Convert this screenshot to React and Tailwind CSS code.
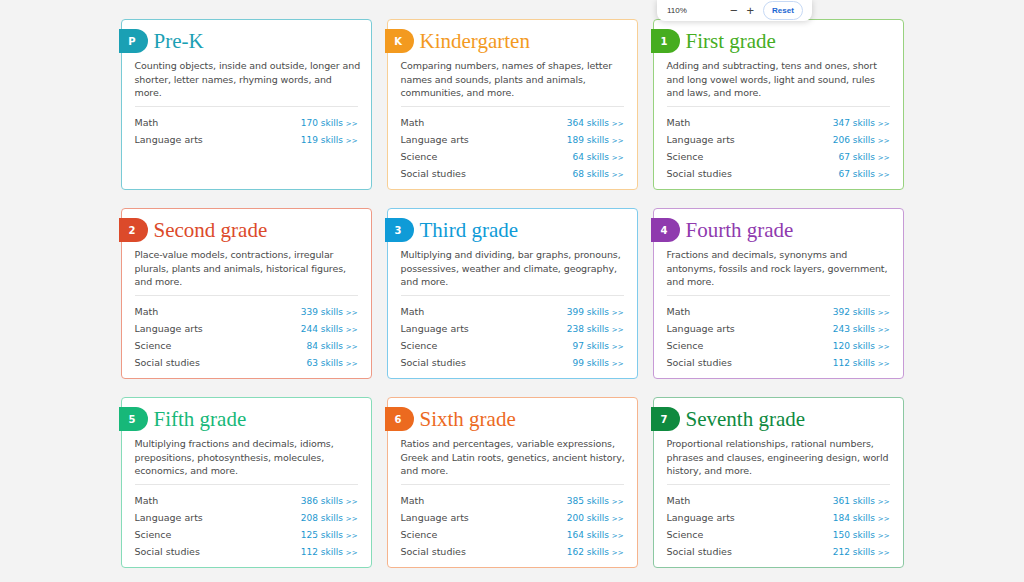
import React from 'react';

// descriptions are kept as the lines they break into on the page
const grades = [
  {
    badge: 'P',
    title: 'Pre-K',
    color: '#1aa0b4',
    border: '#79cbd6',
    lines: ['Counting objects, inside and outside, longer and', 'shorter, letter names, rhyming words, and', 'more.'],
    skills: [
      ['Math', 170],
      ['Language arts', 119],
    ],
  },
  {
    badge: 'K',
    title: 'Kindergarten',
    color: '#f39a1f',
    border: '#f8cf95',
    lines: ['Comparing numbers, names of shapes, letter', 'names and sounds, plants and animals,', 'communities, and more.'],
    skills: [
      ['Math', 364],
      ['Language arts', 189],
      ['Science', 64],
      ['Social studies', 68],
    ],
  },
  {
    badge: '1',
    title: 'First grade',
    color: '#46ad1f',
    border: '#98d27f',
    lines: ['Adding and subtracting, tens and ones, short', 'and long vowel words, light and sound, rules', 'and laws, and more.'],
    skills: [
      ['Math', 347],
      ['Language arts', 206],
      ['Science', 67],
      ['Social studies', 67],
    ],
  },
  {
    badge: '2',
    title: 'Second grade',
    color: '#dc4a2a',
    border: '#ee9a86',
    lines: ['Place-value models, contractions, irregular', 'plurals, plants and animals, historical figures,', 'and more.'],
    skills: [
      ['Math', 339],
      ['Language arts', 244],
      ['Science', 84],
      ['Social studies', 63],
    ],
  },
  {
    badge: '3',
    title: 'Third grade',
    color: '#0f9bd7',
    border: '#7fcbec',
    lines: ['Multiplying and dividing, bar graphs, pronouns,', 'possessives, weather and climate, geography,', 'and more.'],
    skills: [
      ['Math', 399],
      ['Language arts', 238],
      ['Science', 97],
      ['Social studies', 99],
    ],
  },
  {
    badge: '4',
    title: 'Fourth grade',
    color: '#8f3aae',
    border: '#c79ad6',
    lines: ['Fractions and decimals, synonyms and', 'antonyms, fossils and rock layers, government,', 'and more.'],
    skills: [
      ['Math', 392],
      ['Language arts', 243],
      ['Science', 120],
      ['Social studies', 112],
    ],
  },
  {
    badge: '5',
    title: 'Fifth grade',
    color: '#17b879',
    border: '#86dcb9',
    lines: ['Multiplying fractions and decimals, idioms,', 'prepositions, photosynthesis, molecules,', 'economics, and more.'],
    skills: [
      ['Math', 386],
      ['Language arts', 208],
      ['Science', 125],
      ['Social studies', 112],
    ],
  },
  {
    badge: '6',
    title: 'Sixth grade',
    color: '#ec6a1f',
    border: '#f6b48d',
    lines: ['Ratios and percentages, variable expressions,', 'Greek and Latin roots, genetics, ancient history,', 'and more.'],
    skills: [
      ['Math', 385],
      ['Language arts', 200],
      ['Science', 164],
      ['Social studies', 162],
    ],
  },
  {
    badge: '7',
    title: 'Seventh grade',
    color: '#0f8a3f',
    border: '#8bc8a2',
    lines: ['Proportional relationships, rational numbers,', 'phrases and clauses, engineering design, world', 'history, and more.'],
    skills: [
      ['Math', 361],
      ['Language arts', 184],
      ['Science', 150],
      ['Social studies', 212],
    ],
  },
];

const GradeCard = ({ grade }) => (
  <div
    className="relative h-[171px] rounded-[4px] border bg-white px-[13px] pt-[8px]"
    style={{ borderColor: grade.border }}
  >
    <div className="flex items-center">
      <span
        className="-ml-[16px] flex h-[24px] w-[29px] items-center justify-center rounded-r-full pr-[2px] text-[10px] font-bold text-white"
        style={{ backgroundColor: grade.color }}
      >
        {grade.badge}
      </span>
      <h2
        className="ml-[6px] font-['Liberation_Serif',serif] text-[21px] leading-[26px]"
        style={{ color: grade.color }}
      >
        {grade.title}
      </h2>
    </div>
    <p className="mt-[5px] text-[9.5px] leading-[13.5px] tracking-[-0.1px] text-[#4b4b4b]">
      {grade.lines.map((line) => (
        <span key={line} className="block whitespace-nowrap">
          {line}
        </span>
      ))}
    </p>
    <div className="mt-[6px] border-t border-[#e6e6e6] pt-[7px]">
      {grade.skills.map(([name, count]) => (
        <div key={name} className="flex h-[17px] items-baseline justify-between leading-[17px]">
          <span className="text-[9.5px] text-[#4b4b4b]">{name}</span>
          <a href="#" className="text-[9px] text-[#1c97cf]">
            {count} skills <span className="text-[7px]">&gt;&gt;</span>
          </a>
        </div>
      ))}
    </div>
  </div>
);

const ZoomBar = () => (
  <div className="absolute left-[657px] top-0 flex h-[21px] w-[155px] items-center rounded-b-[8px] bg-white pl-[10px] pr-[9px] font-['Liberation_Sans',sans-serif] shadow-[0_1px_6px_rgba(0,0,0,0.18)]">
    <span className="text-[8px] text-[#333]">110%</span>
    <span className="ml-[43px] text-[13px] leading-none text-[#444]">−</span>
    <span className="ml-[9px] text-[13px] leading-none text-[#444]">+</span>
    <button className="ml-auto h-[19px] w-[40px] rounded-full border border-[#c6d9f5] text-[8px] font-semibold text-[#1a66d2]">
      Reset
    </button>
  </div>
);

export default function App() {
  return (
    <div className="relative min-h-[582px] bg-[#f3f3f3] pt-[19px] font-['DejaVu_Sans',Verdana,sans-serif]">
      <div className="mx-auto grid w-[783px] grid-cols-3 gap-x-[15px] gap-y-[18px]">
        {grades.map((g) => (
          <GradeCard key={g.title} grade={g} />
        ))}
      </div>
      <ZoomBar />
    </div>
  );
}
